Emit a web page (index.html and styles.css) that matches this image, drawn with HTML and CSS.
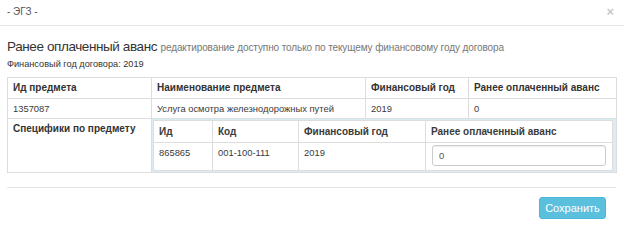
FILE: index.html
```html
<!DOCTYPE html>
<html lang="ru">
<head>
<meta charset="utf-8">
<link rel="stylesheet" href="styles.css">
</head>
<body>
<div class="modal">
  <div class="modal-header">
    <span class="modal-title">- ЭГЗ -</span>
    <span class="close">×</span>
  </div>
  <div class="modal-body">
    <h4 class="title">Ранее оплаченный аванс <small>редактирование доступно только по текущему финансовому году договора</small></h4>
    <div class="year">Финансовый год договора: 2019</div>
    <table class="grid outer">
      <colgroup><col class="c1"><col class="c2"><col class="c3"><col class="c4"></colgroup>
      <tr class="head"><th>Ид предмета</th><th>Наименование предмета</th><th>Финансовый год</th><th>Ранее оплаченный аванс</th></tr>
      <tr class="row"><td>1357087</td><td>Услуга осмотра железнодорожных путей</td><td>2019</td><td>0</td></tr>
      <tr>
        <th class="spec">Специфики по предмету</th>
        <td colspan="3" class="info">
          <table class="grid inner">
            <colgroup><col class="i1"><col class="i2"><col class="i3"><col class="i4"></colgroup>
            <tr class="head"><th>Ид</th><th>Код</th><th>Финансовый год</th><th>Ранее оплаченный аванс</th></tr>
            <tr class="data"><td>865865</td><td>001-100-111</td><td>2019</td><td><input class="field" type="text" value="0"></td></tr>
          </table>
        </td>
      </tr>
    </table>
  </div>
  <div class="modal-footer">
    <button class="btn">Сохранить</button>
  </div>
</div>
</body>
</html>
```
FILE: styles.css
```css
html, body {
  margin: 0;
  padding: 0;
  background: #fff;
  font-family: "Liberation Sans", Arial, sans-serif;
  color: #333;
}
.modal {
  width: 624px;
  height: 240px;
}
.modal-header {
  height: 26px;
  box-sizing: border-box;
  border-bottom: 1px solid #e5e5e5;
  padding: 0 10px 2px 7px;
  display: flex;
  align-items: center;
  justify-content: space-between;
  font-size: 10px;
  color: #555;
}
.close {
  font-size: 13px;
  color: #c8c8c8;
  font-weight: bold;
}
.modal-body {
  padding: 0 8px 0 7px;
}
.title {
  margin: 12px 0 0 0;
  font-size: 13.5px;
  letter-spacing: -0.4px;
  font-weight: normal;
  line-height: 17px;
  color: #333;
}
.title small {
  font-size: 10px;
  letter-spacing: -0.1px;
  color: #777;
}
.year {
  font-size: 9.2px;
  line-height: 12px;
  margin-top: 2px;
  color: #333;
}
.grid {
  border-collapse: collapse;
  font-size: 10px;
  background: #fff;
}
.grid th, .grid td {
  border: 1px solid #ddd;
  text-align: left;
  vertical-align: top;
  padding: 0 5px;
}
.grid td { font-size: 9.4px; color: #3a3a3a; }
.grid th { font-weight: bold; }
.outer {
  margin-top: 7px;
  width: 609px;
  table-layout: fixed;
}
.outer .c1 { width: 144px; }
.outer .c2 { width: 214px; }
.outer .c3 { width: 103px; }
.outer .c4 { width: 148px; }
.outer tr.head > th { height: 20px; line-height: 20px; }
.outer tr.row > td { height: 19px; line-height: 19px; }
.outer th.spec { padding-top: 3px; line-height: 13px; }
.outer td.info {
  background: #d9edf7;
  padding: 1px 3px 1px 1px;
}
.inner {
  width: 100%;
  table-layout: fixed;
}
.inner .i1 { width: 59px; }
.inner .i2 { width: 86px; }
.inner .i3 { width: 127px; }
.inner .head th { height: 19px; line-height: 19px; padding-top: 1px; }
.inner .data td { height: 25px; line-height: 18px; padding-top: 1px; }
.inner .data td:last-child { padding: 2px 6px 0 6px; }
.field {
  display: block;
  box-sizing: border-box;
  width: 100%;
  height: 21px;
  border: 1px solid #ccc;
  border-radius: 3px;
  padding: 0 6px;
  font-family: "Liberation Sans", Arial, sans-serif;
  font-size: 9.5px;
  color: #555;
  box-shadow: inset 0 1px 1px rgba(0,0,0,0.075);
}
.modal-footer {
  margin: 14px 8px 0 7px;
  border-top: 1px solid #e5e5e5;
  display: flex;
  justify-content: flex-end;
  padding: 9px 10px 0 0;
}
.btn {
  width: 67px;
  height: 22px;
  background: #5bc0de;
  border: 1px solid #46b8da;
  border-radius: 3px;
  color: #fff;
  font-family: "Liberation Sans", Arial, sans-serif;
  font-size: 11px;
  padding: 0;
}
```
